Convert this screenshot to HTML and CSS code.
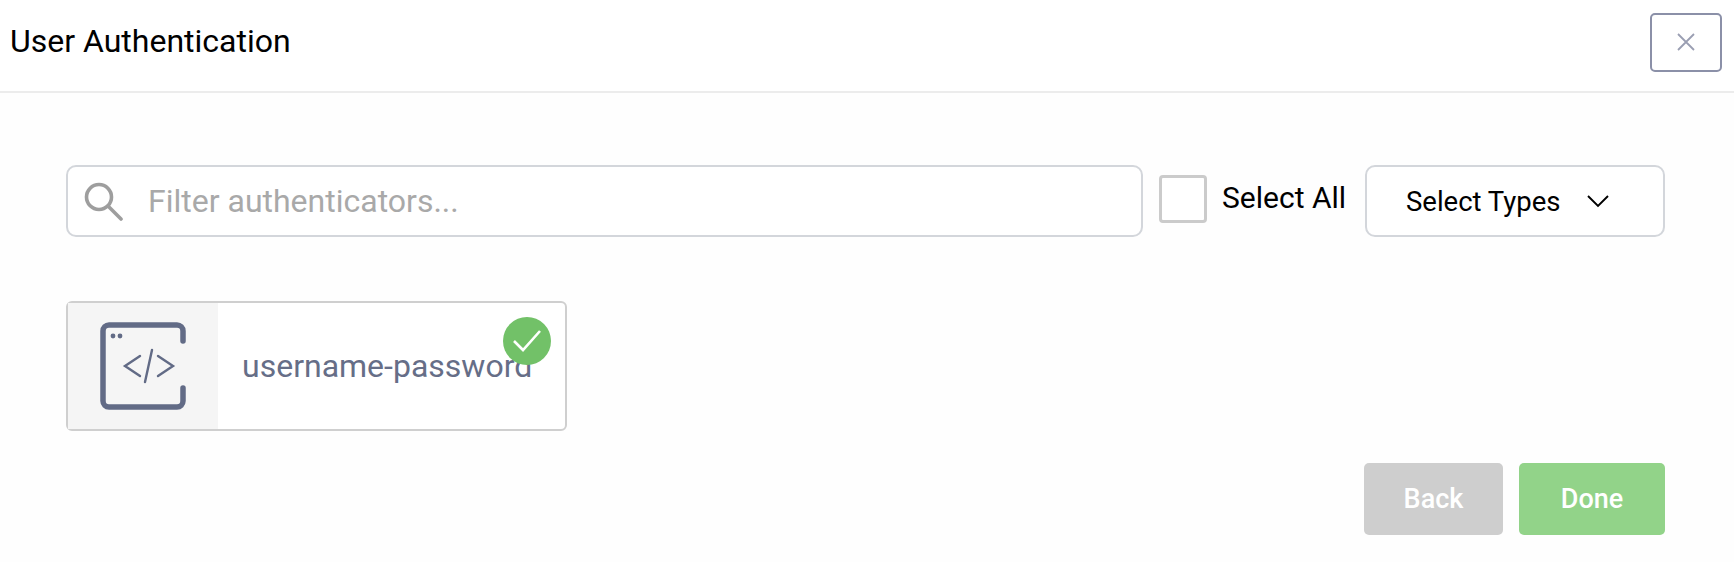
FILE: index.html
```html
<!DOCTYPE html>
<html lang="en">
<head>
    <meta charset="UTF-8">
    <meta name="viewport" content="width=device-width, initial-scale=1.0">
    <title>User Authentication</title>
    <link rel="stylesheet" href="styles.css">
</head>
<body>
    <div class="modal">
        <div class="modal-header">
            <h1 class="modal-title">User Authentication</h1>
            <button class="close-btn" type="button" aria-label="Close">
                <svg width="20" height="20" viewBox="0 0 20 20" fill="none" stroke="#9a9eb2" stroke-width="1.8">
                    <path d="M2 2 L18 18 M18 2 L2 18"/>
                </svg>
            </button>
        </div>
        <div class="modal-body">
            <div class="toolbar">
                <div class="search-box">
                    <svg class="search-icon" width="40" height="40" viewBox="0 0 40 40" fill="none" stroke="#9e9e9e" stroke-width="3.6" stroke-linecap="round">
                        <circle cx="16" cy="16" r="12.5"/>
                        <path d="M25 25 L38 38"/>
                    </svg>
                    <input class="search-input" type="text" placeholder="Filter authenticators...">
                </div>
                <label class="select-all">
                    <span class="checkbox"></span>
                    <span class="select-all-text">Select All</span>
                </label>
                <button class="types-btn" type="button">
                    <span>Select Types</span>
                    <svg width="22" height="13" viewBox="0 0 22 13" fill="none" stroke="#000" stroke-width="1.9">
                        <path d="M1 1 L11 11 L21 1"/>
                    </svg>
                </button>
            </div>
            <div class="auth-card">
                <div class="auth-icon">
                    <svg width="88" height="88" viewBox="0 0 88 88" fill="none" stroke="#626b86" stroke-linecap="round">
                        <path d="M84 19 V9 a6 6 0 0 0 -6 -6 H10 a6 6 0 0 0 -6 6 V79 a6 6 0 0 0 6 6 H78 a6 6 0 0 0 6 -6 V66" stroke-width="5.5"/>
                        <circle cx="14" cy="14" r="2.4" fill="#626b86" stroke="none"/>
                        <circle cx="21" cy="14" r="2.4" fill="#626b86" stroke="none"/>
                        <path d="M41 34 L26 44 L41 54 M59 34 L74 44 L59 54 M53 28 L46 60" stroke-width="2.4"/>
                    </svg>
                </div>
                <div class="auth-name">username-password</div>
                <span class="check-badge">
                    <svg width="30" height="24" viewBox="0 0 30 24" fill="none" stroke="#fff" stroke-width="2.6">
                        <path d="M2 12 L11 21 L28 2"/>
                    </svg>
                </span>
            </div>
            <div class="actions">
                <button class="btn btn-back" type="button">Back</button>
                <button class="btn btn-done" type="button">Done</button>
            </div>
        </div>
    </div>
</body>
</html>
```

FILE: styles.css
```css
body {
    margin: 0;
    padding: 0;
    background-color: #fefefe;
    color: #000;
    font-family: Roboto, "Liberation Sans", sans-serif;
}
.modal-header {
    display: flex;
    align-items: center;
    justify-content: space-between;
    height: 91px;
    padding: 0 12px 0 10px;
    background: #fff;
    border-bottom: 2px solid #ececec;
}
.modal-title {
    margin: 0 0 9px;
    font-size: 32px;
    font-weight: 400;
}
.close-btn {
    display: flex;
    align-items: center;
    justify-content: center;
    box-sizing: border-box;
    width: 72px;
    height: 59px;
    margin-top: -7px;
    padding: 0;
    background: #fff;
    border: 2px solid #8b90a8;
    border-radius: 5px;
}
.modal-body {
    padding: 72px 69px 0 66px;
}
.toolbar {
    display: flex;
    align-items: center;
}
.search-box {
    display: flex;
    align-items: center;
    box-sizing: border-box;
    width: 1077px;
    height: 72px;
    padding-left: 15px;
    background: #fff;
    border: 2px solid #d3d6db;
    border-radius: 10px;
}
.search-input {
    flex: 1;
    margin-left: 25px;
    padding: 0;
    border: none;
    outline: none;
    background: transparent;
    font-family: inherit;
    font-size: 32px;
    color: #333;
}
.search-input::placeholder {
    color: #a9a9a9;
}
.select-all {
    display: flex;
    align-items: center;
    margin: 0 0 5px 16px;
    font-size: 30px;
}
.select-all-text {
    padding-bottom: 2px;
}
.checkbox {
    box-sizing: border-box;
    width: 48px;
    height: 48px;
    margin-right: 15px;
    background: #fff;
    border: 3px solid #cbcbcb;
    border-radius: 4px;
}
.types-btn {
    display: flex;
    align-items: center;
    box-sizing: border-box;
    width: 300px;
    height: 72px;
    margin-left: auto;
    padding: 0 0 0 39px;
    background: #fff;
    border: 2px solid #d3d6db;
    border-radius: 10px;
    font-family: inherit;
    font-size: 27.5px;
    color: #000;
}
.types-btn svg {
    margin-left: 26px;
}
.auth-card {
    position: relative;
    display: flex;
    align-items: center;
    box-sizing: border-box;
    width: 501px;
    height: 130px;
    margin-top: 64px;
    background: #fff;
    border: 2px solid #cfcfcf;
    border-radius: 6px;
}
.auth-icon {
    display: flex;
    align-items: center;
    justify-content: center;
    width: 150px;
    height: 100%;
    background: #f5f5f5;
}
.auth-name {
    margin-left: 24px;
    font-size: 32px;
    color: #666e87;
}
.check-badge {
    position: absolute;
    top: 14px;
    right: 14px;
    display: flex;
    align-items: center;
    justify-content: center;
    width: 48px;
    height: 48px;
    background: #72c168;
    border-radius: 50%;
}
.actions {
    display: flex;
    justify-content: flex-end;
    gap: 16px;
    margin-top: 32px;
}
.btn {
    height: 72px;
    padding: 0;
    border: none;
    border-radius: 5px;
    font-family: inherit;
    font-size: 27px;
    font-weight: 500;
    color: #fff;
}
.btn-back {
    width: 139px;
    background: #cecece;
}
.btn-done {
    width: 146px;
    background: #92d389;
}
```
